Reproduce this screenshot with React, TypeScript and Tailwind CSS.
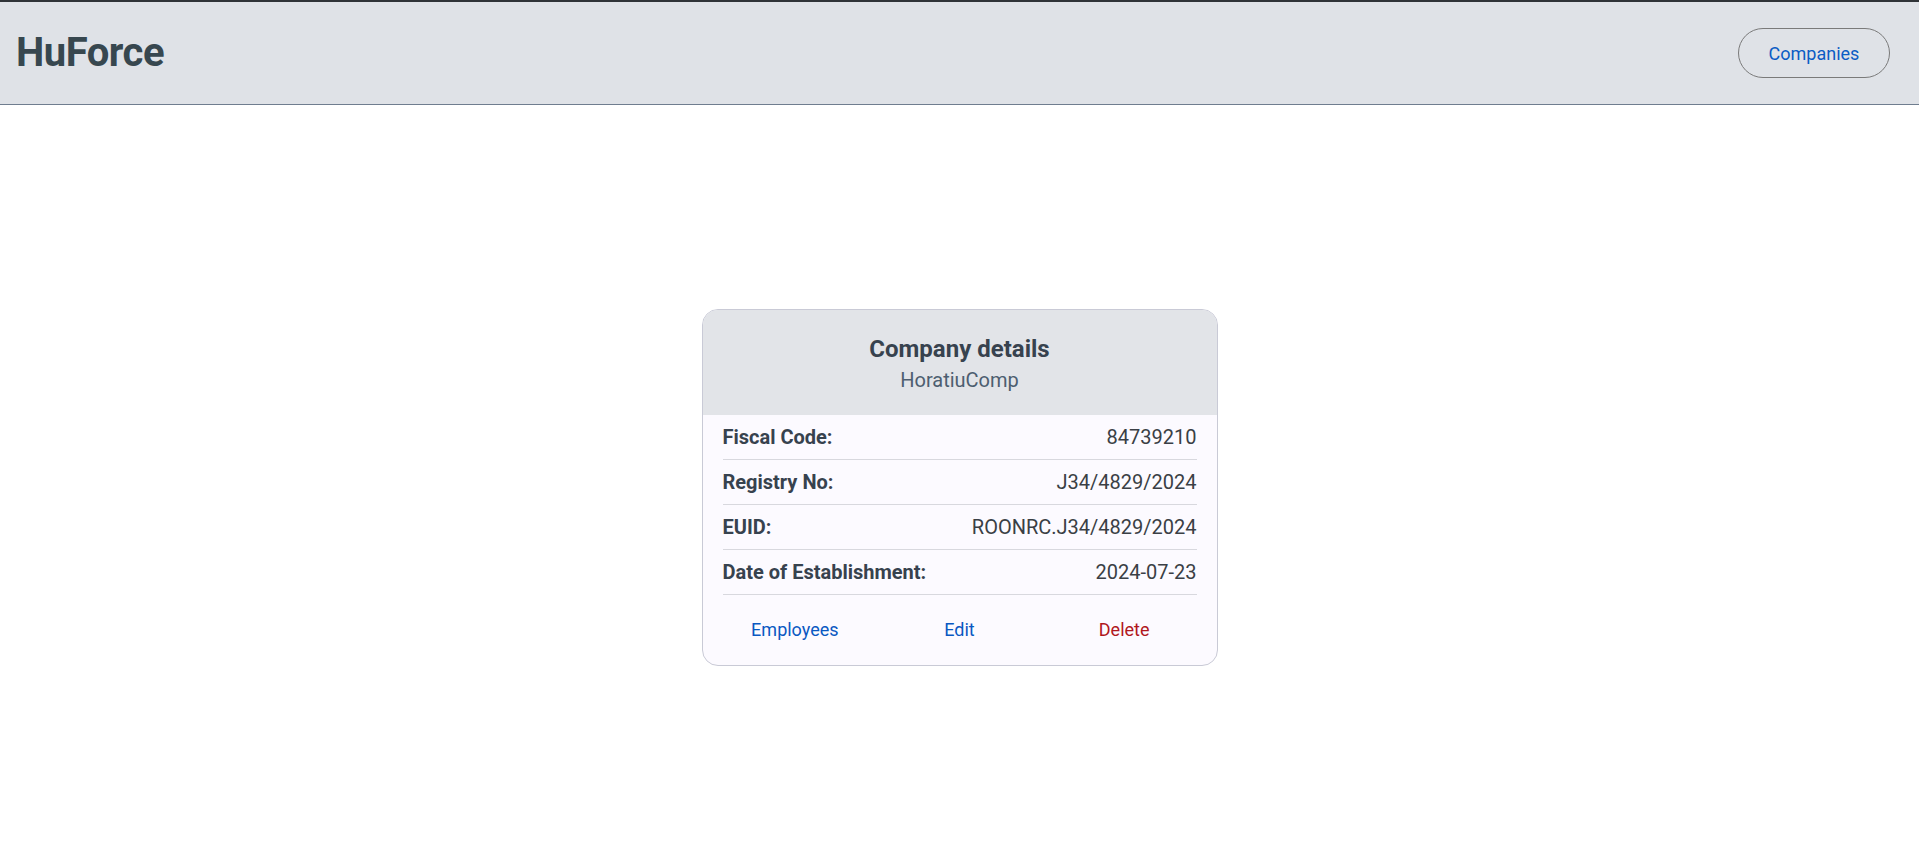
import React, { FC } from "react";

const rows: [string, string][] = [
  ["Fiscal Code:", "84739210"],
  ["Registry No:", "J34/4829/2024"],
  ["EUID:", "ROONRC.J34/4829/2024"],
  ["Date of Establishment:", "2024-07-23"],
];

const App: FC = () => {
  return (
    <div className="min-h-screen bg-white font-['Roboto',sans-serif]">
      <header className="flex flex-row items-center justify-between h-[105px] pl-4 pr-[29px] bg-[#dfe2e7] border-t-2 border-t-[#2f3337] border-b border-b-[#6f7d8f]">
        <h1 className="text-[40px] font-bold text-[#37474f] tracking-[-0.5px]">HuForce</h1>
        <button className="h-[50px] w-[152px] rounded-full border border-[#7a7a7a] text-[18px] text-[#0b5cc4]">
          Companies
        </button>
      </header>
      <main className="flex justify-center pt-[204px]">
        <div className="w-[516px] rounded-2xl border border-[#c9cad6] bg-[#fcfaff] overflow-hidden">
          <div className="flex flex-col items-center h-[105px] pt-[23px] bg-[#e2e4e8]">
            <p className="text-[24px] leading-8 font-bold text-[#37424e]">Company details</p>
            <p className="text-[20px] leading-7 mt-[1px] text-[#4d5e70]">HoratiuComp</p>
          </div>
          <div className="px-5">
            {rows.map(([k, v]) => (
              <div key={k} className="flex flex-row justify-between items-center h-[45px] border-b border-[#d8d8de] text-[20px]">
                <span className="font-bold text-[#37424e]">{k}</span>
                <span className="text-[#3a3f45]">{v}</span>
              </div>
            ))}
          </div>
          <div className="grid grid-cols-3 px-2.5 pt-[21px] pb-[22px] text-[18px]">
            <button className="text-[#0a58c2]">Employees</button>
            <button className="text-[#0a58c2]">Edit</button>
            <button className="text-[#b0171d]">Delete</button>
          </div>
        </div>
      </main>
    </div>
  );
};

export default App;
